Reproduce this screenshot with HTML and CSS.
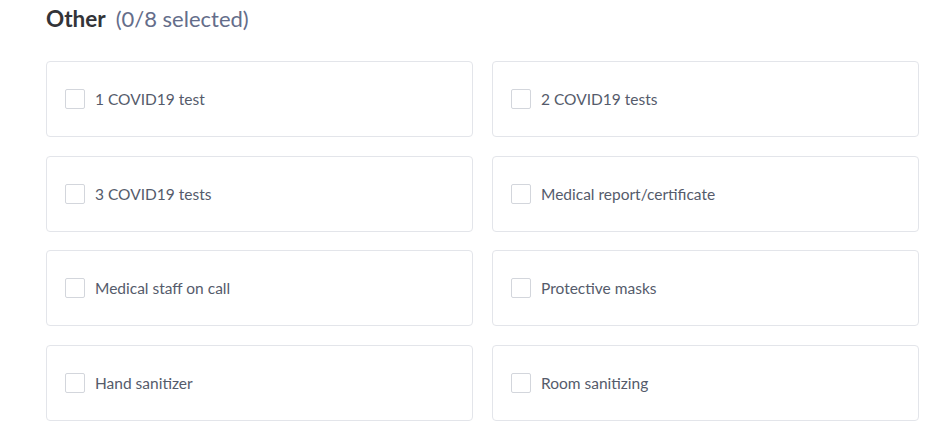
FILE: index.html
```html
<!DOCTYPE html>
<html>
<head>
<meta charset="utf-8">
<link rel="stylesheet" href="styles.css">
</head>
<body>
<div class="section">
  <h2 class="title">Other <span class="count">(0/8 selected)</span></h2>
  <div class="grid">
    <label class="card"><span class="box"></span><span class="label">1 COVID19 test</span></label>
    <label class="card"><span class="box"></span><span class="label">2 COVID19 tests</span></label>
    <label class="card"><span class="box"></span><span class="label">3 COVID19 tests</span></label>
    <label class="card"><span class="box"></span><span class="label">Medical report/certificate</span></label>
    <label class="card"><span class="box"></span><span class="label">Medical staff on call</span></label>
    <label class="card"><span class="box"></span><span class="label">Protective masks</span></label>
    <label class="card"><span class="box"></span><span class="label">Hand sanitizer</span></label>
    <label class="card"><span class="box"></span><span class="label">Room sanitizing</span></label>
  </div>
</div>
</body>
</html>
```
FILE: styles.css
```css
html, body {
  margin: 0;
  padding: 0;
  background: #ffffff;
  font-family: Lato, "Open Sans", sans-serif;
}
.section {
  padding: 0 27px 0 46px;
}
.title {
  margin: 0;
  padding-top: 5px;
  height: 61px;
  box-sizing: border-box;
  font-size: 22.5px;
  line-height: 28px;
  font-weight: 700;
  color: #333438;
}
.count {
  font-size: 22px;
  font-weight: 400;
  color: #646d8a;
  margin-left: 5px;
}
.grid {
  display: grid;
  grid-template-columns: 1fr 1fr;
  column-gap: 19px;
  row-gap: 18.7px;
}
.card {
  display: flex;
  align-items: center;
  height: 76px;
  box-sizing: border-box;
  border: 1px solid #e3e5ea;
  border-radius: 4px;
  padding-left: 18px;
}
.box {
  width: 20px;
  height: 20px;
  box-sizing: border-box;
  border: 1px solid #d3d6dc;
  border-radius: 2px;
  margin-right: 10px;
  flex: none;
}
.label {
  font-size: 15.5px;
  color: #555b6b;
}
```
